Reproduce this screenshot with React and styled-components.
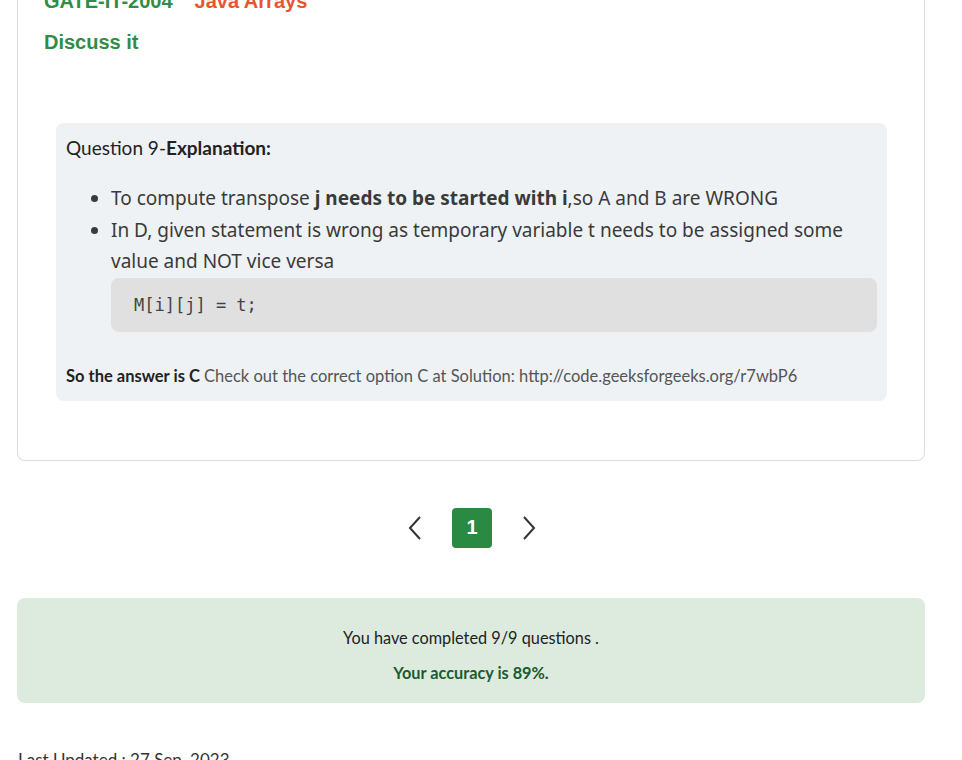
import React from 'react'
import styled, { createGlobalStyle } from 'styled-components'

const GlobalStyle = createGlobalStyle`
  body {
    margin: 0;
    background: #fff;
    font-family: Lato, "Noto Sans", sans-serif;
    overflow: hidden;
  }
`

const Page = styled.div`
  width: 908px;
  padding-left: 17px;
`

const Card = styled.div`
  margin-top: -30px;
  border: 1px solid #dcdcdc;
  border-top: none;
  border-radius: 0 0 8px 8px;
  padding: 20px 26px 59px;
`

const Tags = styled.div`
  display: flex;
  gap: 22px;
  font-family: "Liberation Sans", Arial, sans-serif;
  font-weight: 700;
  font-size: 20px;
  line-height: 22px;
`

const Tag = styled.span`
  color: ${(p) => (p.red ? '#e4572e' : '#2f8d46')};
`

const Discuss = styled.a`
  display: block;
  margin-top: 18px;
  font-family: "Liberation Sans", Arial, sans-serif;
  font-weight: 700;
  font-size: 20px;
  line-height: 24px;
  color: #2f8d46;
  text-decoration: none;
`

const Explanation = styled.div`
  margin: 69px 11px 0 12px;
  background: #eef2f5;
  border-radius: 8px;
  padding: 12px 10px 14px 10px;
`

const ExplTitle = styled.div`
  font-size: 19px;
  line-height: 26px;
  color: #222;
`

const List = styled.ul`
  margin: 22px 0 0;
  padding-left: 45px;
  font-family: "Noto Sans", sans-serif;
  font-size: 19px;
  line-height: 31.5px;
  color: #3a3a3a;
`

const Code = styled.pre`
  margin: 0;
  background: #e0e0e0;
  border-radius: 8px;
  padding: 15px 23px 15px;
  font-family: "DejaVu Sans Mono", monospace;
  font-size: 17px;
  line-height: 24px;
  color: #444;
`

const Answer = styled.p`
  margin: 33px 0 0;
  font-size: 16.5px;
  line-height: 22px;
  color: #555;
  b {
    color: #222;
  }
`

const Pager = styled.div`
  display: flex;
  justify-content: center;
  align-items: center;
  gap: 30px;
  margin-top: 47px;
  padding-left: 2px;
`

const Arrow = styled.span`
  display: flex;
  width: 14px;
  height: 24px;
  color: #333;
`

const PageNum = styled.span`
  width: 40px;
  height: 40px;
  border-radius: 4px;
  background: #2a8a44;
  color: #fff;
  font-family: "Liberation Sans", Arial, sans-serif;
  font-weight: 700;
  font-size: 20px;
  display: flex;
  align-items: center;
  justify-content: center;
`

const Result = styled.div`
  margin-top: 50px;
  background: #dcebde;
  border-radius: 8px;
  padding: 29px 0 6px;
  text-align: center;
`

const ResultLine = styled.p`
  margin: 0 0 13px;
  font-size: 16.3px;
  line-height: 22px;
  color: ${(p) => (p.strong ? '#1e5a2f' : '#222')};
  font-weight: ${(p) => (p.strong ? 700 : 400)};
`

const Updated = styled.div`
  margin-top: 46px;
  padding-left: 1px;
  font-size: 17px;
  line-height: 22px;
  color: #333;
`

function Chevron({ left }) {
  return (
    <svg width="14" height="24" viewBox="0 0 14 24" fill="none" stroke="currentColor" strokeWidth="2">
      {left ? <path d="M12 1 L2 12 L12 23" /> : <path d="M2 1 L12 12 L2 23" />}
    </svg>
  )
}

export default function App() {
  return (
    <Page>
      <GlobalStyle />
      <Card>
        <Tags>
          <Tag>GATE-IT-2004</Tag>
          <Tag red>Java Arrays</Tag>
        </Tags>
        <Discuss href="#">Discuss it</Discuss>

        <Explanation>
          <ExplTitle>
            Question 9-<b>Explanation:</b>
          </ExplTitle>
          <List>
            <li>
              To compute transpose <b>j needs to be started with i</b>,so A and B are WRONG
            </li>
            <li>
              In D, given statement is wrong as temporary variable t needs to be assigned some
              value and NOT vice versa
              <Code>M[i][j] = t;</Code>
            </li>
          </List>
          <Answer>
            <b>So the answer is C</b> Check out the correct option C at Solution: http://code.geeksforgeeks.org/r7wbP6
          </Answer>
        </Explanation>
      </Card>

      <Pager>
        <Arrow><Chevron left /></Arrow>
        <PageNum>1</PageNum>
        <Arrow><Chevron /></Arrow>
      </Pager>

      <Result>
        <ResultLine>You have completed 9/9 questions .</ResultLine>
        <ResultLine strong>Your accuracy is 89%.</ResultLine>
      </Result>

      <Updated>Last Updated : 27 Sep, 2023</Updated>
    </Page>
  )
}
